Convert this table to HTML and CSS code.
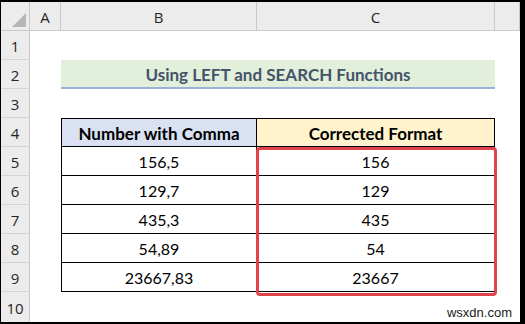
FILE: index.html
```html
<!DOCTYPE html>
<html>
<head>
<meta charset="utf-8">
<link rel="stylesheet" href="styles.css">
</head>
<body>
<div class="frame">
  <div class="sheet">
    <div class="corner"><span class="tri"></span></div>
    <div class="colhead">A</div>
    <div class="colhead">B</div>
    <div class="colhead">C</div>
    <div class="colhead last"></div>

    <div class="rowhead">1</div><div class="cell"></div><div class="cell"></div><div class="cell"></div><div class="cell"></div>

    <div class="rowhead">2</div><div class="cell"></div>
    <div class="title">Using LEFT and SEARCH Functions</div>
    <div class="cell"></div>

    <div class="rowhead">3</div><div class="cell"></div><div class="cell"></div><div class="cell"></div><div class="cell"></div>

    <div class="rowhead">4</div><div class="cell"></div>
    <div class="t th b first-row">Number with Comma</div>
    <div class="t th c first-row">Corrected Format</div>
    <div class="cell"></div>

    <div class="rowhead">5</div><div class="cell"></div>
    <div class="t b">156,5</div><div class="t c">156</div>
    <div class="cell"></div>

    <div class="rowhead">6</div><div class="cell"></div>
    <div class="t b">129,7</div><div class="t c">129</div>
    <div class="cell"></div>

    <div class="rowhead">7</div><div class="cell"></div>
    <div class="t b">435,3</div><div class="t c">435</div>
    <div class="cell"></div>

    <div class="rowhead">8</div><div class="cell"></div>
    <div class="t b">54,89</div><div class="t c">54</div>
    <div class="cell"></div>

    <div class="rowhead">9</div><div class="cell"></div>
    <div class="t b">23667,83</div><div class="t c">23667</div>
    <div class="cell"></div>

    <div class="rowhead lastrow">10</div><div class="cell"></div><div class="cell"></div><div class="cell"></div><div class="cell"></div>

    <div class="highlight"></div>
    <div class="mark">wsxdn.com</div>
  </div>
</div>
</body>
</html>
```

FILE: styles.css
```css
html, body {
  margin: 0;
  padding: 0;
  background: #000;
}

.frame {
  width: 525px;
  height: 324px;
  box-sizing: border-box;
  border-style: solid;
  border-color: #000;
  border-width: 2px 5px 2px 1px;
  background: #fff;
}

.sheet {
  position: relative;
  display: grid;
  grid-template-columns: 29px 31px 196px 238px 25px;
  grid-template-rows: 29px repeat(9, 29px) 30px;
  font-family: Lato, "Open Sans", sans-serif;
  font-size: 16px;
  color: #000;
  background: #fff;
  height: 320px;
}

.corner {
  position: relative;
  background: #ececec;
  border-right: 1px solid #c9c9c9;
  border-bottom: 1px solid #c9c9c9;
}

.tri {
  position: absolute;
  right: 3px;
  bottom: 3px;
  width: 0;
  height: 0;
  border-left: 14px solid transparent;
  border-bottom: 14px solid #b6b6b6;
}

.colhead {
  background: #ececec;
  border-right: 1px solid #c9c9c9;
  border-bottom: 1px solid #c9c9c9;
  display: flex;
  align-items: center;
  justify-content: center;
  color: #262626;
  font-family: "Open Sans", sans-serif;
  font-size: 15px;
  padding-top: 2px;
}

.rowhead {
  background: #ececec;
  border-right: 1px solid #c9c9c9;
  border-bottom: 1px solid #d4d4d4;
  display: flex;
  align-items: center;
  justify-content: center;
  color: #262626;
  font-family: "Open Sans", sans-serif;
  font-size: 15px;
  padding-top: 2px;
}

.rowhead.lastrow {
  border-bottom: none;
}

.cell {
  background: #fff;
}

.title {
  grid-column: 3 / 5;
  background: #e2efda;
  border-bottom: 3px solid #9bb0d6;
  margin-bottom: -1px;
  display: flex;
  align-items: center;
  justify-content: center;
  font-weight: 700;
  color: #44546a;
  font-size: 17px;
  padding-top: 2px;
}

.t {
  display: flex;
  align-items: center;
  justify-content: center;
  border-bottom: 1px solid #000;
  padding-top: 1px;
}

.t.b {
  border-left: 1px solid #000;
  border-right: 1px solid #000;
}

.t.c {
  border-right: 1px solid #000;
}

.t.first-row {
  border-top: 1px solid #000;
}

.th {
  font-weight: 700;
  font-size: 17px;
}

.th.b {
  background: #d9e1f2;
}

.th.c {
  background: #fff2cc;
}

.highlight {
  position: absolute;
  left: 255px;
  top: 145px;
  width: 241px;
  height: 149px;
  box-sizing: border-box;
  border: 3px solid #df444a;
  border-radius: 4px;
}

.mark {
  position: absolute;
  right: 8px;
  bottom: 2px;
  font-family: "Liberation Sans", Arial, sans-serif;
  font-size: 13px;
  color: #1a1a1a;
}
```
